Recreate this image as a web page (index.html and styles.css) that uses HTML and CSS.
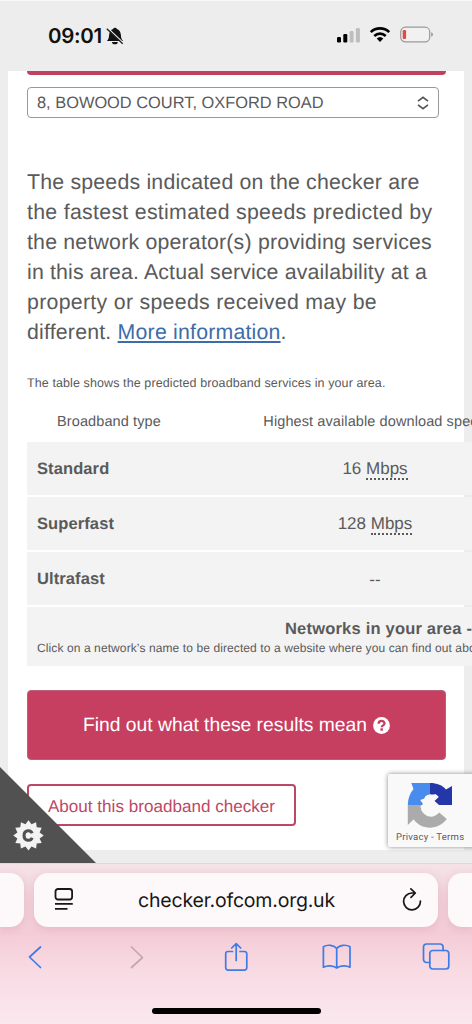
FILE: index.html
```html
<!DOCTYPE html>
<html lang="en">
<head>
<meta charset="utf-8">
<title>Broadband checker</title>
<link rel="stylesheet" href="styles.css">
</head>
<body>
<header class="status">
  <div class="clock"><span class="time">09:01</span>
    <svg class="bell" width="18" height="18" viewBox="0 0 18 18"><path d="M.9 13.900c1.700-1.600 2-2.800 2.200-5.900C3.400 4.600 4.900 2.700 7.100 2.100a2 2 0 0 1 3.800 0c2.200.6 3.700 2.500 4 5.900.2 3.100.5 4.300 2.200 5.900z" fill="#111"/><path d="M6 14.900h5.800a2.900 2.300 0 0 1-5.800 0z" fill="#111"/><path d="M1.600 .9l15.600 14.800" stroke="#ededed" stroke-width="1.300"/><path d="M.8 1.700l15.900 15" stroke="#222" stroke-width="1.300"/></svg>
  </div>
  <div class="signals">
    <svg width="25" height="18" viewBox="0 0 25 18"><rect x="1" y="11" width="4" height="5.500" rx="1.200"/><rect x="7.300" y="8" width="4" height="8.500" rx="1.200"/><rect x="13.600" y="5" width="4" height="11.500" rx="1.200" fill="#bebebe"/><rect x="19.900" y="2" width="4" height="14.500" rx="1.200" fill="#bebebe"/></svg>
    <svg class="wifi" width="22" height="17" viewBox="0 0 22 17" fill="none" stroke="#000" stroke-width="2.700"><path d="M1.800 6.100a13.300 13.300 0 0 1 18.400 0M5.300 9.900a8.400 8.400 0 0 1 11.400 0"/><path d="M7.700 12.500a4.900 4.900 0 0 1 6.600 0L11 15.900z" fill="#000" stroke="none"/></svg>
    <svg class="battery" width="34" height="18" viewBox="0 0 34 18"><rect x=".7" y="1.200" width="29" height="14.700" rx="4.700" fill="#f2f1f1" stroke="#999" stroke-width="1.200"/><rect x="2.700" y="4" width="3.400" height="9" rx="1.200" fill="#e5483f"/><path d="M31.200 6.300c2.300.8 2.300 3.700 0 4.500z" fill="#999"/></svg>
  </div>
</header>

<main class="page">
  <section class="sheet">
    <div class="search-end"></div>
    <div class="select"><span>8, BOWOOD COURT, OXFORD ROAD</span>
      <svg width="12" height="14" viewBox="0 0 12 14" fill="none" stroke="#555" stroke-width="1.700"><path d="M1 5.200L6 1.300l5 3.900M1 8.800l5 3.900 5-3.900"/></svg>
    </div>
    <p class="intro">The speeds indicated on the checker are<br><span class="wide">the fastest estimated speeds predicted by</span><br>the network operator(s) providing services<br><span class="tight">in this area. Actual service availability at a</span><br><span class="wide">property or speeds received may be</span><br>different. <a class="link">More information</a>.</p>
    <p class="caption">The table shows the predicted broadband services in your area.</p>
    <div class="table">
      <div class="row head"><span class="th">Broadband type</span><span class="th">Highest available download speed</span></div>
      <div class="row"><b>Standard</b><span class="val">16 <abbr>Mbps</abbr></span></div>
      <div class="row"><b>Superfast</b><span class="val">128 <abbr>Mbps</abbr></span></div>
      <div class="row"><b>Ultrafast</b><span class="val">--</span></div>
      <div class="networks"><strong>Networks in your area -</strong><small>Click on a network’s name to be directed to a website where you can find out about</small></div>
    </div>
    <div class="button"><span>Find out what these results mean</span>
      <svg width="17" height="17" viewBox="0 0 17 17"><circle cx="8.500" cy="8.500" r="8.400" fill="#fff"/><path d="M5.600 6.700c0-3.600 6-3.600 5.900-.3 0 2-2.800 1.900-2.800 3.800" fill="none" stroke="#c73f60" stroke-width="2.300"/><rect x="7.400" y="11.300" width="2.500" height="2.400" fill="#c73f60"/></svg>
    </div>
    <div class="outline"><span>About this broadband checker</span></div>
  </section>
  <div class="cookie">
    <svg width="96" height="96" viewBox="0 0 96 96"><path d="M0 0l96 96H0z" fill="#515151"/><path d="M28.500 53.200l3 4.100 4.600-2.100.6 5 5 .6-2.100 4.600 4.100 3-4.100 3 2.100 4.600-5 .6-.6 5-4.600-2.100-3 4.100-3-4.100-4.600 2.100-.6-5-5-.6 2.100-4.600-4.100-3 4.100-3-2.100-4.600 5-.6.6-5 4.600 2.100z" fill="#f3f3f3"/><path d="M32.200 66.300c-1.500-3.800-8.200-3.500-8.200 2.200s6.700 6 8.200 2.200" fill="none" stroke="#515151" stroke-width="3"/></svg>
  </div>
  <aside class="captcha">
    <svg width="46" height="47" viewBox="0 0 46 47"><path d="M.8 23C1 16 3 11 6.500 7L4.300 1H23v11.500c-3.300.2-5.400 2-5.700 4.500l-4.100 1L17 23z" fill="#4a8bee"/><path d="M23 1c7 0 12.500 2.200 16 6.500L45 4v19H31.500l-5-4.500 5-4c-2-1.800-5-2.200-8.500-2z" fill="#2337a8"/><path d="M.8 23H14.500l-.5 4.500c4 8.400 13 9.400 18.200 3l7.600 6.600C31 49 13.500 48 6.700 37.300L.8 43z" fill="#ababab"/><path d="M14 18l3.500-1.500c1-3 3.500-4 6-4l-.5 2 5.500-2.500 3.200 3-4.200 4 4.500 4-3.500 3.500c-4 1.500-6-1-6.500-3.500l-4 5-5-3 3-3z" fill="#f9f9f9"/></svg>
    <span>Privacy - Terms</span>
  </aside>
</main>

<footer class="browser">
  <div class="tabs">
    <div class="tab prev"></div>
    <div class="tab address">
      <svg width="20" height="24" viewBox="0 0 20 24" fill="none" stroke="#171717" stroke-width="1.800"><rect x="1.500" y="1" width="16.600" height="10.500" rx="2.500"/><path d="M1 15.800h17.800M1 20.900h12.500"/></svg>
      <span class="url">checker.ofcom.org.uk</span>
      <svg width="20" height="24" viewBox="0 0 20 24" fill="none" stroke="#171717" stroke-width="1.700" stroke-linecap="round" stroke-linejoin="round"><path d="M13.300 5H9.800a8.400 8.400 0 1 0 8.600 8.100M8.900 .9L13.300 5 9 9.300"/></svg>
    </div>
    <div class="tab next"></div>
  </div>
  <nav class="tools">
    <svg width="30" height="30" viewBox="0 0 30 30"><path d="M20.500 5L9.500 15l11 10.500"/></svg>
    <svg class="off" width="30" height="30" viewBox="0 0 30 30"><path d="M10.500 5l11 10.500-11 10"/></svg>
    <svg width="30" height="30" viewBox="0 0 30 30"><path d="M11.500 9.500H7a2.300 2.300 0 0 0-2.300 2.300v14A2.300 2.300 0 0 0 7 28.100h16.500a2.300 2.300 0 0 0 2.300-2.300v-14a2.300 2.300 0 0 0-2.300-2.300H19M15.200 18.500V1.800M10.700 6l4.500-4.300L19.700 6"/></svg>
    <svg width="30" height="30" viewBox="0 0 30 30"><path d="M14.700 6.500C12.200 2.900 5.500 2.300 1.400 4.700v20.500c3.700-2.100 9.800-1.900 13.300.8 3.500-2.700 9.600-2.900 13.300-.8V4.700c-4.100-2.400-10.800-1.800-13.300 1.800zm0 0V26"/></svg>
    <svg width="30" height="30" viewBox="0 0 30 30"><rect x="7.800" y="8.500" width="19" height="18.500" rx="3"/><path d="M7.800 20.500H4.500a3 3 0 0 1-3-3V5a3 3 0 0 1 3-3h13.600a3 3 0 0 1 3 3v3.500"/></svg>
  </nav>
  <div class="home"></div>
</footer>
</body>
</html>
```
FILE: styles.css
```css
* { box-sizing: border-box; }
body {
  margin: 0;
  width: 472px;
  height: 1024px;
  overflow: hidden;
  display: flex;
  flex-direction: column;
  background: #ededed;
  color: #5a5a5a;
  font-family: "Liberation Sans", Arial, sans-serif;
  text-rendering: geometricPrecision;
}
svg { display: block; flex: none; }
.status {
  height: 71px;
  flex: none;
  display: flex;
  justify-content: space-between;
  padding: 25px 38px 0 48px;
  border-top: 1px solid #f8f8f8;
}
.clock, .signals { display: flex; height: 19px; }
.time { font: 600 20.500px/19px Inter, sans-serif; color: #111; letter-spacing: -.3px; }
.bell { margin: 1px 0 0 4px; }
.wifi { margin-left: 8px; }
.battery { margin-left: 9px; }

.page { position: relative; height: 792px; flex: none; overflow: hidden; }
.sheet { margin: 0 8px; height: 779px; padding: 0 18px 0 19px; background: #fff; }
.search-end { height: 4px; border-radius: 0 0 5px 5px; background: #c1405f; }
.select {
  width: 412px;
  height: 31px;
  margin-top: 12px;
  padding: 0 9px;
  border: 1px solid #999;
  border-radius: 4px;
  display: flex;
  align-items: center;
  justify-content: space-between;
  font-size: 16.400px;
}
.select span { padding-top: 2px; }
.intro {
  margin: 49px 0 0;
  font-size: 21.300px;
  line-height: 30px;
  letter-spacing: .2px;
  white-space: nowrap;
}
.wide { letter-spacing: .3px; }
.tight { letter-spacing: .15px; }
.link { color: #3e6ca9; text-decoration: underline; text-underline-offset: 2px; }
.caption { margin: 26px 0 0; font-size: 12.500px; line-height: 20px; letter-spacing: .1px; white-space: nowrap; }
.table { width: 532px; margin-top: 8px; display: flex; flex-direction: column; gap: 2px; }
.row {
  height: 53px;
  display: grid;
  grid-template-columns: 164px 368px;
  align-items: center;
  padding-top: 2px;
  background: #f3f3f3;
  font-size: 16.500px;
}
.row b { padding-left: 10px; letter-spacing: .1px; }
.val { text-align: center; font-size: 17px; }
.head { height: 39px; background: none; font-size: 14.500px; letter-spacing: .1px; }
.th { text-align: center; white-space: nowrap; }
abbr { display: inline-block; line-height: 19px; border-bottom: 2px dotted #5a5a5a; }
.networks {
  height: 59px;
  padding: 12px 0 0 10px;
  background: #f3f3f3;
  display: flex;
  flex-direction: column;
  white-space: nowrap;
}
.networks strong { padding-left: 248px; font-size: 16.500px; line-height: 20px; letter-spacing: .2px; }
.networks small { font-size: 12px; line-height: 19px; letter-spacing: .1px; }
.button {
  height: 70px;
  margin-top: 24px;
  border: 1px solid #b9617a;
  border-radius: 4px;
  background: #c73f60;
  color: #fff;
  display: flex;
  align-items: center;
  justify-content: center;
  gap: 6px;
  font-size: 19.300px;
}
.button span { padding-top: 2px; }
.outline {
  width: 269px;
  height: 42px;
  margin-top: 24px;
  border: 2px solid #bd4766;
  border-radius: 4px;
  color: #bd4766;
  font-size: 17.100px;
  line-height: 41px;
  text-align: center;
  white-space: nowrap;
}
.cookie { position: absolute; left: 0; bottom: 0; }
.captcha {
  position: absolute;
  left: 388px;
  top: 703px;
  width: 90px;
  height: 73px;
  padding: 8px 6px 0 8px;
  border-radius: 2px;
  background: #f9f9f9;
  box-shadow: 0 0 5px #888;
}
.captcha svg { margin-left: 11px; }
.captcha span { display: block; font: 9.500px/12px Roboto, sans-serif; letter-spacing: .25px; margin-top: 3px; white-space: nowrap; }

.browser {
  height: 161px;
  flex: none;
  padding-top: 9px;
  border-top: 1px solid #e2d8db;
  background: linear-gradient(#f5e3e8 0, #f3d2dc 35px, #f4ccd6 70px, #f8dae3 105px, #fae8ee 161px);
}
.tabs { display: flex; gap: 10px; height: 54px; }
.tab { background: #fdf9fa; box-shadow: 0 2px 9px rgba(170, 100, 120, .2); }
.prev { width: 24px; border-radius: 0 14px 14px 0; }
.next { width: 24px; border-radius: 14px 0 0 14px; }
.address {
  width: 404px;
  border-radius: 14px;
  padding: 0 16px 0 20px;
  display: flex;
  align-items: center;
  justify-content: space-between;
}
.url { font: 19.500px/24px Inter, sans-serif; color: #171717; letter-spacing: -.2px; margin-right: 3px; }
.tools {
  height: 30px;
  margin-top: 15px;
  padding: 0 20px;
  display: flex;
  justify-content: space-between;
  fill: none;
  stroke: #3f7be5;
  stroke-width: 1.700;
  stroke-linecap: round;
  stroke-linejoin: round;
}
.off { stroke: #c3a6b1; }
.home { width: 169px; height: 6px; margin: 36px 0 0 152px; border-radius: 3px; background: #000; }
```
